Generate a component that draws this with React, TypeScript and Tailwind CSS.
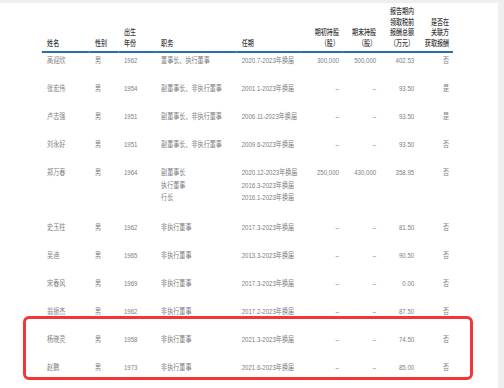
import React from 'react'

type Row = {
    name: string
    sex: string
    born: string
    roles: string[]
    terms: string[]
    start: string
    end: string
    pay: string
    related: string
}

const rows: Row[] = [
    { name: '高迎欣', sex: '男', born: '1962', roles: ['董事长、执行董事'], terms: ['2020.7-2023年换届'], start: '300,000', end: '500,000', pay: '402.53', related: '否' },
    { name: '张宏伟', sex: '男', born: '1954', roles: ['副董事长、非执行董事'], terms: ['2001.1-2023年换届'], start: '–', end: '–', pay: '93.50', related: '是' },
    { name: '卢志强', sex: '男', born: '1951', roles: ['副董事长、非执行董事'], terms: ['2006.11-2023年换届'], start: '–', end: '–', pay: '93.50', related: '是' },
    { name: '刘永好', sex: '男', born: '1951', roles: ['副董事长、非执行董事'], terms: ['2009.6-2023年换届'], start: '–', end: '–', pay: '93.50', related: '否' },
    { name: '郑万春', sex: '男', born: '1964', roles: ['副董事长', '执行董事', '行长'], terms: ['2020.12-2023年换届', '2016.3-2023年换届', '2016.1-2023年换届'], start: '250,000', end: '430,000', pay: '358.95', related: '否' },
    { name: '史玉柱', sex: '男', born: '1962', roles: ['非执行董事'], terms: ['2017.3-2023年换届'], start: '–', end: '–', pay: '81.50', related: '否' },
    { name: '吴迪', sex: '男', born: '1965', roles: ['非执行董事'], terms: ['2013.3-2023年换届'], start: '–', end: '–', pay: '90.50', related: '否' },
    { name: '宋春风', sex: '男', born: '1969', roles: ['非执行董事'], terms: ['2017.3-2023年换届'], start: '–', end: '–', pay: '0.00', related: '否' },
    { name: '翁振杰', sex: '男', born: '1962', roles: ['非执行董事'], terms: ['2017.2-2023年换届'], start: '–', end: '–', pay: '87.50', related: '否' },
    { name: '杨晓灵', sex: '男', born: '1958', roles: ['非执行董事'], terms: ['2021.3-2023年换届'], start: '–', end: '–', pay: '74.50', related: '否' },
    { name: '赵鹏', sex: '男', born: '1973', roles: ['非执行董事'], terms: ['2021.6-2023年换届'], start: '–', end: '–', pay: '85.00', related: '否' },
]

function Lines({ items }: { items: string[] }) {
    return <>{items.map((t, i) => <div key={i}>{t}</div>)}</>
}

export default function App() {
    return (
        <div className="relative h-[388px] w-[504px] overflow-hidden bg-[#efefef] pt-[3px] pr-[6px] font-['Liberation_Sans','Noto_Sans_CJK_SC',sans-serif]">
            <div className="h-full bg-white">
                {/* the source page is squeezed sideways, so the table is too */}
                <div className="w-[655px] origin-top-left scale-x-[0.76] pl-[55px]">
                    <table className="w-[541px] table-fixed border-collapse text-[8px]">
                        <colgroup>
                            <col className="w-[63px]" />
                            <col className="w-[38px]" />
                            <col className="w-[49px]" />
                            <col className="w-[106px]" />
                            <col className="w-[84px]" />
                            <col className="w-[56px]" />
                            <col className="w-[49px]" />
                            <col className="w-[50px]" />
                            <col className="w-[46px]" />
                        </colgroup>
                        <thead>
                            <tr className="border-b-2 border-[#2a6fb5] align-bottom leading-[10.5px] text-[#3a3a3a]">
                                <th className="pl-[7px] pb-[2px] text-left font-medium">姓名</th>
                                <th className="pl-[7px] pb-[2px] text-left font-medium">性别</th>
                                <th className="pl-[7px] pb-[2px] text-left font-medium"><Lines items={['出生', '年份']} /></th>
                                <th className="pl-[7px] pb-[2px] text-left font-medium">职务</th>
                                <th className="pl-[7px] pb-[2px] text-left font-medium">任期</th>
                                <th className="pr-[5px] pb-[2px] text-right font-medium"><Lines items={['期初持股', '（股）']} /></th>
                                <th className="pr-[5px] pb-[2px] text-right font-medium"><Lines items={['期末持股', '（股）']} /></th>
                                <th className="pr-[5px] pt-[4px] pb-[2px] text-right font-medium"><Lines items={['报告期内', '领取税前', '报酬总额', '（万元）']} /></th>
                                <th className="pr-[5px] pb-[2px] text-right font-medium"><Lines items={['是否在', '关联方', '获取报酬']} /></th>
                            </tr>
                        </thead>
                        <tbody className="align-top leading-[12.5px] text-[#7d7d7d]">
                            {rows.map((r) => {
                                const pad = r.roles.length > 1 ? 'pt-[2px] pb-[15px]' : 'pt-[2px] pb-[13.5px]'
                                return (
                                    <tr key={r.name}>
                                        <td className={`pl-[7px] ${pad}`}>{r.name}</td>
                                        <td className={`pl-[7px] ${pad}`}>{r.sex}</td>
                                        <td className={`pl-[7px] ${pad}`}>{r.born}</td>
                                        <td className={`pl-[7px] ${pad}`}><Lines items={r.roles} /></td>
                                        <td className={`pl-[7px] ${pad}`}><Lines items={r.terms} /></td>
                                        <td className={`pr-[5px] text-right ${pad}`}>{r.start}</td>
                                        <td className={`pr-[5px] text-right ${pad}`}>{r.end}</td>
                                        <td className={`pr-[5px] text-right ${pad}`}>{r.pay}</td>
                                        <td className={`pr-[5px] text-right ${pad}`}>{r.related}</td>
                                    </tr>
                                )
                            })}
                        </tbody>
                    </table>
                </div>
            </div>
            <div className="absolute left-[23px] top-[316px] h-[64px] w-[450px] rounded-[6px] border-[3px] border-[#f23535]" />
        </div>
    )
}
